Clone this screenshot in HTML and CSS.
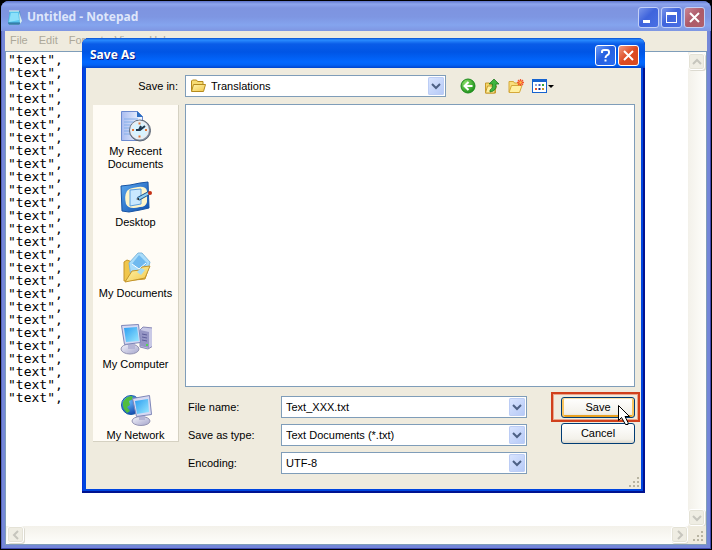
FILE: index.html
```html
<!DOCTYPE html>
<html lang="en">
<head>
<meta charset="utf-8">
<title>Untitled - Notepad</title>
<link rel="stylesheet" href="styles.css">
</head>
<body>
<svg class="defs" aria-hidden="true">
  <defs>
    <linearGradient id="screen" x1="0" y1="0" x2="1" y2="1"><stop offset="0" stop-color="#2a9df0"/><stop offset="1" stop-color="#9be8ff"/></linearGradient>
    <linearGradient id="grey" x1="0" y1="0" x2="1" y2="1"><stop offset="0" stop-color="#f4f4fb"/><stop offset="1" stop-color="#a5a5cc"/></linearGradient>
    <linearGradient id="gold" x1="0" y1="0" x2="1" y2="1"><stop offset="0" stop-color="#fff6b0"/><stop offset="1" stop-color="#f2c749"/></linearGradient>
    <linearGradient id="paper" x1="0" y1="0" x2="1" y2="0"><stop offset="0" stop-color="#a9bcf0"/><stop offset="1" stop-color="#f6faff"/></linearGradient>
    <linearGradient id="blue" x1="0" y1="0" x2="1" y2="1"><stop offset="0" stop-color="#5aa7ee"/><stop offset="1" stop-color="#0f4fae"/></linearGradient>
    <radialGradient id="green" cx=".35" cy=".3" r=".8"><stop offset="0" stop-color="#8be069"/><stop offset="1" stop-color="#138a13"/></radialGradient>
    <radialGradient id="globe" cx=".35" cy=".3" r=".8"><stop offset="0" stop-color="#6dbcff"/><stop offset="1" stop-color="#0a3fa5"/></radialGradient>
  </defs>
</svg>
<main class="window">
  <header class="titlebar">
    <svg class="app-icon" viewBox="0 0 16 16"><path d="M3 2h10l1 12-2 2H2L1 13z" fill="#4d8fb5"/><path d="M3 2h9l1 12H1z" fill="#59c5ee"/><path d="M4 4h7l1 7-10 2z" fill="#8be0fa"/><path d="M12 3l3 9-2 3z" fill="#d7eef0"/><path d="M3 1v2M5 1v2M7 1v2M9 1v2M11 1v2" stroke="#e8f6e8"/><path d="M1 14h12" stroke="#246c9b"/></svg>
    <h1 class="title">Untitled - Notepad</h1>
    <button class="cap" aria-label="Minimize"><svg viewBox="0 0 19 19"><path d="M4 12h7v3H4z" fill="#fff"/></svg></button>
    <button class="cap" aria-label="Maximize"><svg viewBox="0 0 19 19"><path d="M4 4h11v11H4zM5 7v7h9V7z" fill="#fff" fill-rule="evenodd"/></svg></button>
    <button class="cap cap-close" aria-label="Close"><svg viewBox="0 0 19 19"><path d="M5 5l9 9M14 5l-9 9" stroke="#fff" stroke-width="2"/></svg></button>
  </header>
  <nav class="menu">
    <button>File</button><button>Edit</button><button>Format</button><button>View</button><button>Help</button>
  </nav>
  <section class="editor">
    <textarea class="text" aria-label="Text" spellcheck="false">"text",
"text",
"text",
"text",
"text",
"text",
"text",
"text",
"text",
"text",
"text",
"text",
"text",
"text",
"text",
"text",
"text",
"text",
"text",
"text",
"text",
"text",
"text",
"text",
"text",
"text",
"text",</textarea>
    <div class="vbar">
      <button class="sb" aria-label="Scroll up"><svg viewBox="0 0 10 10"><path d="M1 7l4-4 4 4"/></svg></button>
      <button class="sb" aria-label="Scroll down"><svg viewBox="0 0 10 10"><path d="M1 3l4 4 4-4"/></svg></button>
    </div>
    <div class="hbar">
      <button class="sb" aria-label="Scroll left"><svg viewBox="0 0 10 10"><path d="M7 1L3 5l4 4"/></svg></button>
      <button class="sb" aria-label="Scroll right"><svg viewBox="0 0 10 10"><path d="M3 1l4 4-4 4"/></svg></button>
    </div>
    <div class="corner"><svg class="grip" viewBox="0 0 12 12"><path d="M9 1h2v2H9zM5 5h2v2H5zM9 5h2v2H9zM1 9h2v2H1zM5 9h2v2H5zM9 9h2v2H9z"/></svg></div>
  </section>
</main>

<div class="dialog" role="dialog" aria-labelledby="dlg-title">
  <header class="dlg-bar">
    <h2 class="title" id="dlg-title">Save As</h2>
    <button class="cap" aria-label="Help"><svg viewBox="0 0 19 19"><path d="M6 7V5.500Q6 4 8 4h3Q13 4 13 6v1Q13 8.500 11 9.300 9.500 10 9.500 12M9.500 13.500v2" stroke="#fff" stroke-width="2" fill="none"/></svg></button>
    <button class="cap cap-close" aria-label="Close"><svg viewBox="0 0 19 19"><path d="M5 5l9 9M14 5l-9 9" stroke="#fff" stroke-width="2"/></svg></button>
  </header>
  <div class="dlg-body">
    <div class="lookin">
      <label for="folder">Save in:</label>
      <div class="combo combo-folder">
        <svg class="i16" viewBox="0 0 16 16"><path d="M1.500 13V3l1-1h4l1 1.500h5.500v3" fill="#f7dc72" stroke="#b58a1c"/><path d="M1.500 13.500l2-7h12l-2 7z" fill="url(#gold)" stroke="#b58a1c"/></svg>
        <select id="folder"><option>Translations</option></select>
        <span class="drop"><svg viewBox="0 0 10 10"><path d="M1 3l4 4 4-4"/></svg></span>
      </div>
      <div class="tools">
        <button aria-label="Back"><svg class="i16" viewBox="0 0 16 16"><circle cx="8" cy="8" r="7" fill="url(#green)" stroke="#1d8a1d"/><path d="M12.500 8H5M8.500 4L4.500 8l4 4" stroke="#fff" stroke-width="2" fill="none"/></svg></button>
        <button aria-label="Up one level"><svg class="i16" viewBox="0 0 16 16"><path d="M1.500 15V5h4l1 1h5v9z" fill="#f6d76a" stroke="#c79a2c"/><path d="M1.500 15l2-7h9l-2 7z" fill="#fff0a0" stroke="#c79a2c"/><path d="M6 12q3-1 2.500-6H5l5-5 5 5h-3q1 7-6 8z" fill="#3fb53f" stroke="#167016" stroke-width=".7"/></svg></button>
        <button aria-label="Create new folder"><svg class="i16" viewBox="0 0 16 16"><path d="M1 14V3.500h4.500l1 1.500H12v3" fill="#f9df7b" stroke="#d5a83a"/><path d="M1 14.500l2.500-7H14l-2.500 7z" fill="#fff0a0" stroke="#d5a83a"/><path d="M12.500 1v7M9 4.500h7M10 2l5 5M15 2l-5 5" stroke="#f2572b" stroke-width="1.300"/><circle cx="12.500" cy="4.500" r="1.200" fill="#ffc04a"/></svg></button>
        <button class="views" aria-label="View menu"><svg viewBox="0 0 23 16"><rect x=".5" y="1.500" width="14" height="13" fill="#fff" stroke="#1663cf"/><path d="M0 1h15v3H0z" fill="#1663cf"/><path d="M3 6h2v2H3z" fill="#9aa4cf"/><path d="M6.500 6h2v2h-2z" fill="#3b5fc5"/><path d="M10 6h2v2h-2z" fill="#35a23b"/><path d="M3 10h2v2H3z" fill="#e8532d"/><path d="M6.500 10h2v2h-2z" fill="#102b86"/><path d="M10 10h2v2h-2z" fill="#c8902a"/><path d="M16 7h6l-3 3z" fill="#000"/></svg></button>
      </div>
    </div>
    <div class="columns">
      <nav class="places">
        <button><svg viewBox="0 0 32 32"><path d="M1.500 1.500h16l5 5v24h-21z" fill="url(#paper)" stroke="#6d8bd0"/><path d="M17 1v6h6z" fill="#2d6fc2"/><path d="M4 9h14M4 12h10M4 15h8M4 18h7M4 21h7M4 24h8" stroke="#84aee9"/><circle cx="20" cy="20.500" r="10.500" fill="#8290a2" stroke="#5f6876"/><circle cx="19.500" cy="20" r="8.500" fill="#d9f3ff" stroke="#e8edf2" stroke-width="2"/><path d="M19.500 12.500v2M19.500 25.500v2M12 20h2M25 20h2" stroke="#e57334" stroke-width="2"/><path d="M16 20h4l5-4M19 20l2-4" stroke="#20384f" stroke-width="2" fill="none"/></svg><span>My Recent Documents</span></button>
        <button><svg viewBox="0 0 32 32"><path d="M1 5l9-1 10-2 8-1 1 26-9 2-11 2-7-1z" fill="url(#blue)" stroke="#1653a4"/><path d="M7 10q2-3 11-4 8-1 9 4v11q-1 5-7 5-11 3-14-3-2-8 1-13z" fill="#fff5ca"/><path d="M10 9l11-1v15l-11 2z" fill="#c9e8ff" stroke="#5a9ee0"/><path d="M18 18l11-6" stroke="#1e5289" stroke-width="4"/><path d="M18 18l11-6" stroke="#8fd0f4" stroke-width="2"/><circle cx="30" cy="12" r="2" fill="#c53116"/><path d="M16 18l3-1v2z" fill="#111"/></svg><span>Desktop</span></button>
        <button><svg viewBox="0 0 32 32"><path d="M4 29V10l3-2 5 2 3 3 12-1 2 3-4 12z" fill="#f0c64c" stroke="#c4952b"/><path d="M9 11l9-10 4 0 8 9-3 11-16 4z" fill="#a9dcfa" stroke="#81b8dc"/><path d="M12 12l7-9 8 8-5 8z" fill="#6fb9ef"/><path d="M12 12l7 5 7-6" stroke="#fff" fill="none"/><path d="M5 30l7-11 8-1 2-3 8-1-5 12z" fill="url(#gold)" stroke="#c4952b"/><path d="M17 20l4-4 4 2-4 5z" fill="#a4dcf6"/></svg><span>My Documents</span></button>
        <button><svg viewBox="0 0 32 32"><path d="M20 7l3-3 10 1v18l-5 3-8-2z" fill="#c9c9e6" stroke="#8888b5"/><path d="M20 7l9 2v16l-9-2z" fill="#9696c5"/><path d="M22 11l5 1M22 14l5 1M22 17l5 1" stroke="#5f5f9b"/><path d="M26 21h2v2h-2z" fill="#53d64f"/><ellipse cx="10" cy="26" rx="9" ry="5" fill="url(#grey)" stroke="#9393b2"/><path d="M8 19h7v7H8z" fill="#b4b4d5"/><path d="M1.500 2.500l17-1 2 18-16 2z" fill="#d6d9f3" stroke="#7e86b8"/><path d="M4 5l13-1 2 14-13 1z" fill="url(#screen)"/></svg><span>My Computer</span></button>
        <button><svg viewBox="0 0 32 32"><circle cx="11" cy="11" r="9.500" fill="url(#globe)" stroke="#165ba9"/><path d="M3 8q3-6 9-6l1 3-4 2 1 4-3 2 3 4-3 2Q2 14 3 8z" fill="#50bd3d"/><ellipse cx="21" cy="27" rx="9" ry="4.500" fill="url(#grey)" stroke="#9393b2"/><path d="M19 20h6v6h-6z" fill="#b4b4d5"/><path d="M12.500 4.500l17-3 2 19-15 2z" fill="#d6d9f3" stroke="#7e86b8"/><path d="M15 7l13-2 1 13-12 2z" fill="url(#screen)"/></svg><span>My Network</span></button>
      </nav>
      <div class="main">
        <div class="files" role="listbox" aria-label="Files"></div>
        <div class="form">
          <div class="fields">
            <label for="name">File name:</label>
            <div class="combo"><input id="name" type="text" value="Text_XXX.txt"><span class="drop"><svg viewBox="0 0 10 10"><path d="M1 3l4 4 4-4"/></svg></span></div>
            <label for="type">Save as type:</label>
            <div class="combo"><select id="type"><option>Text Documents (*.txt)</option></select><span class="drop"><svg viewBox="0 0 10 10"><path d="M1 3l4 4 4-4"/></svg></span></div>
            <label for="enc">Encoding:</label>
            <div class="combo"><select id="enc"><option>UTF-8</option></select><span class="drop"><svg viewBox="0 0 10 10"><path d="M1 3l4 4 4-4"/></svg></span></div>
          </div>
          <div class="actions">
            <button class="btn btn-default">Save</button>
            <button class="btn">Cancel</button>
            <span class="highlight"></span>
            <svg class="cursor" viewBox="0 0 14 22"><path d="M1.500 1.500v15l3-3 4 7h2.500v-2l-3-6h4.500z" fill="#fff" stroke="#000"/></svg>
          </div>
        </div>
      </div>
    </div>
    <svg class="grip dlg-grip" viewBox="0 0 12 12"><path d="M9 1h2v2H9zM5 5h2v2H5zM9 5h2v2H9zM1 9h2v2H1zM5 9h2v2H5zM9 9h2v2H9z"/></svg>
  </div>
</div>
</body>
</html>
```
FILE: styles.css
```css
* { box-sizing: border-box; }

body {
  margin: 0;
  min-height: 100vh;
  display: flex;
  position: relative;
  background: #000;
  color: #000;
  font: 11px/13px "Liberation Sans", Arial, sans-serif;
}

button, input, select, textarea { font: inherit; color: inherit; margin: 0; padding: 0; border: 0; background: none; border-radius: 0; }
svg { display: block; flex: none; }
.defs { position: absolute; width: 0; height: 0; }

.window {
  flex: 1;
  display: flex;
  flex-direction: column;
  margin: 1px;
  padding: 0 4px 4px;
  border-radius: 8px 8px 0 0;
  background: #7487d8;
  box-shadow: inset -1px -1px #3f49ae, inset 1px 0 #5565bd;
}

.titlebar {
  display: flex;
  align-items: center;
  gap: 2px;
  height: 30px;
  margin: 0 -4px;
  padding: 2px 6px 0;
  border-radius: 8px 8px 0 0;
  background: linear-gradient(#5e74cb 0, #8ea6ee 3px, #7e94e0 7px, #7e96e2 16px, #84a4ee 24px, #7f96e2 30px);
}
.title { flex: 1; margin: 0; font: bold 12px/18px "Noto Sans", "Open Sans", sans-serif; color: #dfe6fa; }
.app-icon { width: 16px; height: 16px; margin-right: 2px; }

.cap {
  flex: none;
  width: 21px;
  height: 21px;
  border: 1px solid #c3d0f6;
  border-radius: 3px;
  background: linear-gradient(135deg, #7995ea, #3f64dc 45%, #4a70e4);
}
.cap svg { width: 19px; height: 19px; }
.cap-close { background: linear-gradient(135deg, #c98595, #ad5a69 50%, #b0606a); }

.menu { display: flex; gap: 11px; height: 20px; padding: 0 5px 2px; background: #efebde; }
.menu button { color: #aca899; }

.editor {
  flex: 1;
  display: grid;
  grid-template-columns: 1fr 18px;
  grid-template-rows: 1fr 18px;
  border: 1px solid #7f9db9;
  background: #fff;
}
.text {
  resize: none;
  outline: 0;
  overflow: hidden;
  width: 100%;
  height: 100%;
  padding: 1px 2px;
  font: 13px/13px "DejaVu Sans Mono", "Liberation Mono", monospace;
}
.vbar, .hbar { display: flex; justify-content: space-between; }
.vbar { flex-direction: column; background: linear-gradient(90deg, #f3f1ea, #fefefb); padding-top: 1px; }
.hbar { background: linear-gradient(#f3f1ea, #fefefb); padding-left: 1px; }
.sb {
  display: grid;
  place-items: center;
  width: 17px;
  height: 17px;
  border: 1px solid #fff;
  border-radius: 3px;
  background: #efede3;
  box-shadow: inset 0 0 0 1px #e4e2d6, 1px 1px #dcdad0;
}
.sb svg, .drop svg { width: 10px; height: 10px; fill: none; stroke: #c6c5bd; stroke-width: 2; }
.corner { display: grid; place-items: end; padding: 2px; background: #efebde; }
.grip { width: 12px; height: 12px; fill: #b8b4a2; }

.dialog {
  position: absolute;
  left: 82px;
  right: 67px;
  top: 38px;
  display: flex;
  flex-direction: column;
  padding: 0 4px 4px;
  border-radius: 7px 7px 0 0;
  background: #0046e0;
  box-shadow: inset -2px -2px #001290, inset 1px 0 #0831d9;
}
.dlg-bar {
  display: flex;
  align-items: center;
  gap: 2px;
  height: 30px;
  margin: 0 -4px;
  padding: 4px 6px 0 8px;
  border-radius: 7px 7px 0 0;
  background: linear-gradient(#0a50cf 0, #2a8cff 2px, #0a5ce8 6px, #0055e5 14px, #0268ff 24px, #0262f5 27px, #0044cc 30px);
}
.dlg-bar .title { color: #fff; text-shadow: 1px 1px #0a1883; }
.dlg-bar .cap { border-color: #fff; background: linear-gradient(135deg, #6d9cf8, #2660e0 45%, #2a6cf0); }
.dlg-bar .cap-close { background: linear-gradient(135deg, #f09a80, #dd4a22 50%, #d84a20); }

.dlg-body { position: relative; padding: 7px 6px 15px 7px; background: #efebde; }
.lookin { display: flex; align-items: center; }
.lookin label { width: 92px; padding-right: 7px; text-align: right; }

.combo {
  display: flex;
  align-items: center;
  height: 22px;
  padding: 1px 1px 1px 4px;
  border: 1px solid #7f9db9;
  background: #fff;
}
.combo-folder { width: 261px; gap: 5px; }
.combo input, .combo select { flex: 1; min-width: 0; width: 100%; height: 18px; outline: 0; appearance: none; }
.drop {
  flex: none;
  display: grid;
  place-items: center;
  width: 16px;
  height: 18px;
  border-radius: 2px;
  background: linear-gradient(135deg, #dbe6ff, #b4c8f6);
  box-shadow: inset 0 0 0 1px #bccdf5;
  pointer-events: none;
}
.drop svg { stroke: #4d6185; }
.i16 { width: 16px; height: 16px; }

.tools { display: flex; gap: 8px; padding-left: 14px; }
.views svg { width: 23px; height: 16px; }

.columns { display: flex; align-items: flex-start; gap: 6px; margin-top: 7px; }
.places {
  flex: none;
  width: 86px;
  margin-top: 1px;
  padding-top: 5px;
  background: #fffcf6;
  border-right: 1px solid #d5d1c2;
  border-bottom: 1px solid #d5d1c2;
}
.places button { display: flex; flex-direction: column; align-items: center; gap: 3px; width: 100%; height: 71px; }
.places button:last-child { height: 47px; }
.places svg { width: 32px; height: 32px; }
.places span { padding: 0 4px; }

.main { flex: 1; min-width: 0; }
.files { height: 283px; border: 1px solid #7f9db9; background: #fff; }
.form { display: flex; justify-content: space-between; margin-top: 9px; }
.fields { display: grid; grid-template-columns: 96px 246px; gap: 6px 0; align-items: center; }
.fields label { padding-left: 3px; }

.actions { position: relative; display: flex; flex-direction: column; gap: 5px; width: 74px; padding-top: 1px; }
.btn {
  height: 21px;
  border: 1px solid #003c74;
  border-radius: 3px;
  background: linear-gradient(#fff, #f3f1ea 80%, #dcd7cb);
}
.btn-default { box-shadow: inset 0 1px #fde3a6, inset 2px 0 #f8c560, inset -2px 0 #f8c560, inset 0 -2px #e8a020; }
.highlight { position: absolute; left: -10px; top: -4px; width: 89px; height: 30px; border: 2px solid #d0401c; box-shadow: inset 0 0 0 1px #eaa68c; }
.cursor { position: absolute; left: 56px; top: 8px; width: 14px; height: 22px; }
.dlg-grip { position: absolute; right: 1px; bottom: 1px; }
```
